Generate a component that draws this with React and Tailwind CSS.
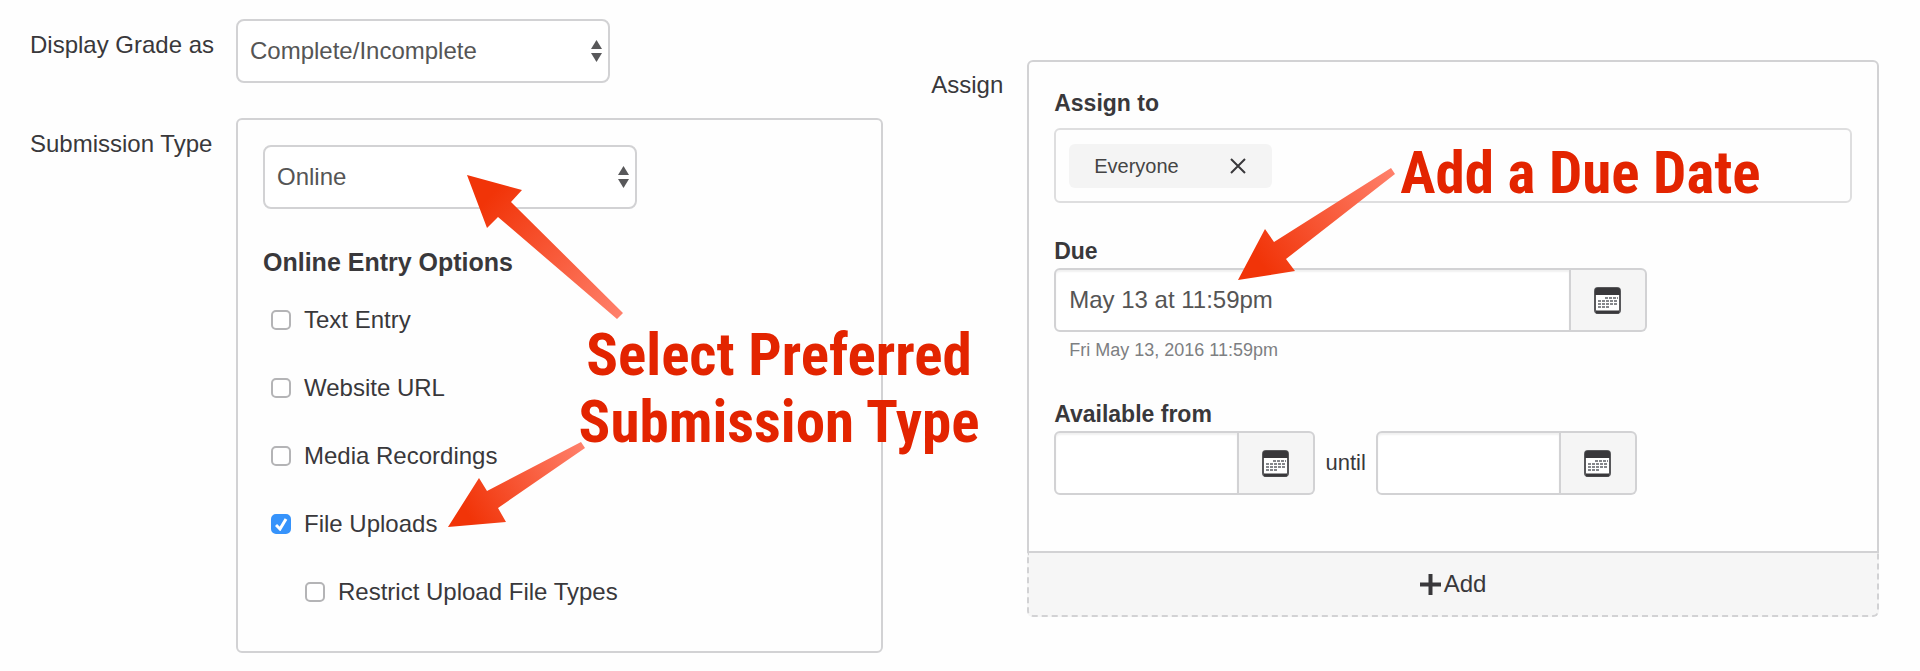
import React, { useState } from "react";

const onlineEntryOptions = [
  { id: "text-entry", label: "Text Entry" },
  { id: "website-url", label: "Website URL" },
  { id: "media-recordings", label: "Media Recordings" },
  { id: "file-uploads", label: "File Uploads" },
  { id: "restrict-types", label: "Restrict Upload File Types", nested: true },
];

const CalendarIcon = () => (
  <svg width="27" height="27" viewBox="0 0 27 27" aria-hidden="true">
    <rect x="1" y="1" width="25" height="25" rx="3" fill="#fff" stroke="#58585b" strokeWidth="2" />
    <path d="M1 3a2 2 0 0 1 2-2h21a2 2 0 0 1 2 2v5H1z" fill="#39383b" />
    <path d="M2 25h23" stroke="#39383b" strokeWidth="3" />
    <g stroke="#85878b" strokeWidth="2" strokeDasharray="3 1">
      <path d="M11 11h13" />
      <path d="M4 14h20" />
      <path d="M4 17h20" />
      <path d="M4 20h12" />
    </g>
  </svg>
);

const Select = ({ id, label, options }) => (
  <div className="relative w-[374px] max-w-full">
    <select
      id={id}
      aria-label={label}
      className="block h-16 w-full appearance-none rounded-lg border-2 border-[#d2d2d4] bg-white pr-10 pl-3 text-2xl text-[#555]"
    >
      {options.map((option) => (
        <option key={option}>{option}</option>
      ))}
    </select>
    <svg
      className="pointer-events-none absolute top-[21px] right-2"
      width="11"
      height="22"
      viewBox="0 0 11 22"
      fill="#58585a"
      aria-hidden="true"
    >
      <path d="M5.500 0 11 9H0z" />
      <path d="M0 13h11l-5.500 9z" />
    </svg>
  </div>
);

const DateField = ({ id, label, value, className }) => (
  <div className={`flex h-16 ${className}`}>
    <input
      id={id}
      type="text"
      aria-label={label}
      defaultValue={value}
      className="min-w-0 flex-1 rounded-l-md border-2 border-[#d2d2d4] bg-white px-[13px] text-2xl text-[#555] shadow-[inset_0_2px_2px_rgba(0,0,0,0.06)]"
    />
    <button
      type="button"
      aria-label={`Open calendar for ${label}`}
      className="flex w-[76px] items-center justify-center rounded-r-md border-2 border-l-0 border-[#d2d2d4] bg-[#f5f5f5] pr-[2px]"
    >
      <CalendarIcon />
    </button>
  </div>
);

// points are drawn inside a width x height box, tip and tail set the gradient
const Arrow = ({ id, width, height, points, tip, tail, className }) => (
  <svg
    className={`pointer-events-none absolute ${className}`}
    width={width}
    height={height}
    viewBox={`0 0 ${width} ${height}`}
    aria-hidden="true"
  >
    <defs>
      <linearGradient
        id={id}
        gradientUnits="userSpaceOnUse"
        x1={tip[0]}
        y1={tip[1]}
        x2={tail[0]}
        y2={tail[1]}
      >
        <stop offset="0.150" stopColor="#f13408" />
        <stop offset="1" stopColor="#ff806b" />
      </linearGradient>
    </defs>
    <polygon points={points} fill={`url(#${id})`} />
  </svg>
);

const Note = ({ className, children }) => (
  <p
    className={`pointer-events-none absolute font-['Marker_Felt','Roboto_Condensed','Liberation_Sans',sans-serif] text-[59px] leading-[67px] font-bold whitespace-nowrap text-[#e32400] ${className}`}
  >
    {children}
  </p>
);

const SubmissionSettings = () => {
  const [checked, setChecked] = useState({ "file-uploads": true });

  const toggle = (id) => {
    setChecked({ ...checked, [id]: !checked[id] });
  };

  return (
    <section className="relative flex flex-col gap-[35px] pt-[19px]">
      <div className="flex">
        <label htmlFor="grade" className="w-[236px] shrink-0 pt-[10px] pl-[30px]">
          Display Grade as
        </label>
        <Select id="grade" options={["Complete/Incomplete", "Percentage", "Points"]} />
      </div>
      <div className="flex">
        <label htmlFor="submission" className="w-[236px] shrink-0 pt-[10px] pl-[30px]">
          Submission Type
        </label>
        <div className="flex-1 rounded-md border-2 border-[#d2d2d4] p-[25px]">
          <Select id="submission" options={["Online", "On Paper", "No Submission"]} />
          <h2 className="mt-[37px] text-[25px] leading-8 font-bold">Online Entry Options</h2>
          <div className="mt-2 pl-2">
            {onlineEntryOptions.map(({ id, label, nested }) => (
              <label
                key={id}
                className={`flex h-[68px] items-center gap-[13px] ${nested ? "pl-[34px]" : ""}`}
              >
                <input
                  type="checkbox"
                  checked={!!checked[id]}
                  onChange={() => toggle(id)}
                  className="h-5 w-5 shrink-0 appearance-none rounded-[5px] border-2 border-[#b4b4b6] bg-white checked:border-[#3693fb] checked:bg-[#3693fb]"
                />
                {checked[id] && (
                  <svg
                    className="pointer-events-none absolute ml-1"
                    width="13"
                    height="13"
                    viewBox="0 0 13 13"
                    fill="none"
                    stroke="#fff"
                    strokeWidth="3"
                    aria-hidden="true"
                  >
                    <path d="M1 7l4 4 6-10" />
                  </svg>
                )}
                {label}
              </label>
            ))}
          </div>
        </div>
      </div>

      <Arrow
        id="arrow-select"
        className="top-[174px] left-[466px]"
        width={158}
        height={146}
        points="1,1 56,16 45,28 157,139 151,145 32,43 21,54"
        tip={[1, 1]}
        tail={[154, 142]}
      />
      <Arrow
        id="arrow-uploads"
        className="top-[441px] left-[447px]"
        width={139}
        height={87}
        points="1,86 32,37 40,50 134,1 138,7 51,67 59,81"
        tip={[1, 86]}
        tail={[136, 4]}
      />
      <Note className="top-[321px] left-[779px] -translate-x-1/2 text-center">
        Select Preferred
        <br />
        Submission Type
      </Note>
    </section>
  );
};

const AssignSettings = () => (
  <section className="relative flex pt-[60px] pr-[41px] pl-12">
    <h2 className="w-24 shrink-0 pt-[9px]">Assign</h2>
    <div className="min-w-0 flex-1">
      <div className="rounded-t-md border-2 border-[#d2d2d4] px-[25px] pt-[25px] pb-14">
        <label htmlFor="assign-to" className="block text-[23px] font-bold">
          Assign to
        </label>
        <div className="mt-[9px] flex h-[75px] items-center rounded-md border-2 border-[#dededf] px-[13px]">
          <span className="flex h-11 w-[203px] items-center justify-between rounded-md bg-[#f4f4f4] pr-[26px] pl-[25px] text-[20px] text-[#444]">
            Everyone
            <button type="button" aria-label="Remove Everyone">
              <svg width="16" height="16" viewBox="0 0 16 16" stroke="#39383b" strokeWidth="2">
                <path d="M1 1l14 14M15 1L1 15" />
              </svg>
            </button>
          </span>
          <input id="assign-to" type="text" className="h-full min-w-0 flex-1 px-2" />
        </div>

        <label htmlFor="due" className="mt-8 block text-[23px] font-bold">
          Due
        </label>
        <DateField
          id="due"
          label="Due"
          value="May 13 at 11:59pm"
          className="mt-px w-[593px] max-w-full"
        />
        <p className="mt-[6px] pl-[15px] text-lg leading-6 text-[#7d7f82]">
          Fri May 13, 2016 11:59pm
        </p>

        <label htmlFor="from" className="mt-9 block text-[23px] font-bold">
          Available from
        </label>
        <div className="mt-px flex items-center">
          <DateField id="from" label="Available from" className="w-[261px]" />
          <label htmlFor="until" className="w-[61px] text-center text-[22px]">
            until
          </label>
          <DateField id="until" label="until" className="w-[261px]" />
        </div>
      </div>
      <button
        type="button"
        className="flex h-16 w-full items-center justify-center gap-[3px] rounded-b-md border-2 border-t-0 border-dashed border-[#d2d2d4] bg-[#f6f6f6]"
      >
        <svg width="21" height="21" viewBox="0 0 21 21" stroke="#39383b" strokeWidth="4">
          <path d="M10.500 0v21M0 10.500h21" />
        </svg>
        Add
      </button>
    </div>

    <Arrow
      id="arrow-due"
      className="top-[167px] left-[354px]"
      width={159}
      height={114}
      points="1,113 28,62 37,75 154,1 158,7 49,92 58,104"
      tip={[1, 113]}
      tail={[156, 4]}
    />
    <Note className="top-[139px] left-[517px]">Add a Due Date</Note>
  </section>
);

const App = () => {
  return (
    <main className="grid min-h-screen grid-cols-[46%_54%] items-start bg-[#fefefe] font-['Liberation_Sans',Arial,sans-serif] text-2xl leading-8 text-[#39383b]">
      <SubmissionSettings />
      <AssignSettings />
    </main>
  );
};

export default App;
